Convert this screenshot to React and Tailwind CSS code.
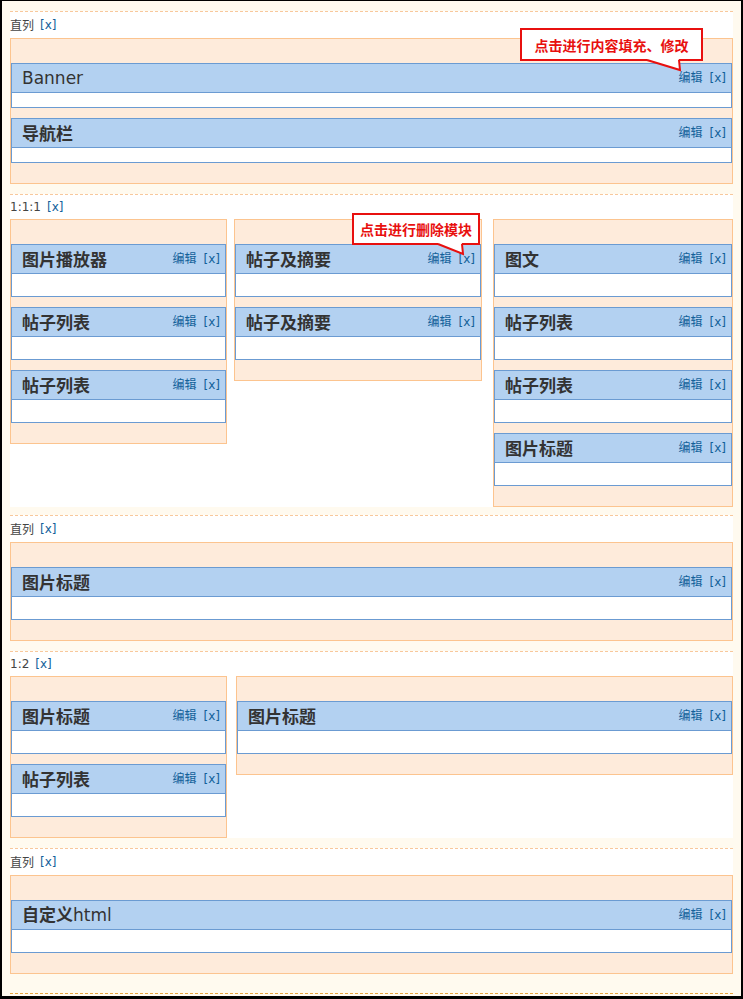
import React from "react";

const cjk = { fontFamily: '"Noto Sans CJK SC", "Noto Sans", sans-serif' };
const latin = { fontFamily: '"DejaVu Sans", "Noto Sans CJK SC", sans-serif' };

function Module({ title, en, short }) {
  return (
    <div className="border border-[#6b9bd2] bg-white">
      <div className="h-[29px] bg-[#b3d1f1] border-b border-[#6b9bd2] flex items-center pl-[10px] pr-[5px]">
        {en ? (
          <span className="text-[17px] text-[#333] leading-none" style={latin}>
            {title}
          </span>
        ) : (
          <span className="relative -top-[1px] text-[17px] text-[#333] font-bold leading-none" style={cjk}>
            {title}
            {title === "自定义" && <span className="font-normal" style={latin}>html</span>}
          </span>
        )}
        <span className="relative -top-[1px] ml-auto text-[12px] text-[#12619a] leading-none" style={cjk}>
          编辑
        </span>
        <span className="ml-[7px] text-[12px] text-[#12619a] leading-none" style={latin}>
          [x]
        </span>
      </div>
      <div className={short ? "h-[14px]" : "h-[22px]"} />
    </div>
  );
}

function Box({ items, className = "", short }) {
  return (
    <div className={"border border-[#fcc48f] bg-[#feebdb] pt-[24px] pb-[20px] flex flex-col gap-[10px] " + className}>
      {items.map((t, i) => (
        <Module key={i} title={t} en={t === "Banner"} short={short} />
      ))}
    </div>
  );
}

function Section({ label, tall, className = "mb-[10px]", children }) {
  return (
    <div className={"bg-white border-t border-dashed border-[#f8c89c] " + className}>
      <div className={(tall ? "h-[26px]" : "h-[24px]") + " flex items-center text-[12px] leading-none"}>
        <span className="text-[#444]" style={label.includes(":") ? latin : cjk}>
          {label}
        </span>
        <span className="ml-[6px] text-[#12619a]" style={latin}>
          [x]
        </span>
      </div>
      {children}
    </div>
  );
}

function Callout({ text, className, tail }) {
  return (
    <>
      <div
        className={"absolute border-2 border-[#e8100f] bg-white flex items-center justify-center text-[14px] font-bold text-[#e8100f] leading-none " + className}
        style={cjk}
      >
        {text}
      </div>
      {tail}
    </>
  );
}

export default function App() {
  return (
    <div className="relative w-[743px] h-[999px] overflow-hidden bg-[#fffaef] border-l-2 border-r-2 border-t border-b-[3px] border-black pt-[10px] pl-[8px] pr-[8px]">
      <Section label="直列" tall>
        <Box items={["Banner", "导航栏"]} short />
      </Section>

      <Section label="1:1:1" className="mb-[8px]">
        <div className="flex items-start">
          <Box items={["图片播放器", "帖子列表", "帖子列表"]} className="w-[217px]" />
          <Box items={["帖子及摘要", "帖子及摘要"]} className="w-[248px] ml-[7px]" />
          <Box items={["图文", "帖子列表", "帖子列表", "图片标题"]} className="w-[240px] ml-[11px]" />
        </div>
      </Section>

      <Section label="直列" tall>
        <Box items={["图片标题"]} />
      </Section>

      <Section label="1:2">
        <div className="flex items-start">
          <Box items={["图片标题", "帖子列表"]} className="w-[217px]" />
          <Box items={["图片标题"]} className="flex-1 ml-[9px]" />
        </div>
      </Section>

      <Section label="直列" tall className="">
        <Box items={["自定义"]} />
      </Section>

      <div className="mt-[19px] border-t border-dashed border-[#e9a53f]" />

      <Callout
        text="点击进行内容填充、修改"
        className="left-[518px] top-[27px] w-[183px] h-[33px]"
        tail={
          <svg className="absolute left-[638px] top-[55px]" width="45" height="18" viewBox="0 0 45 18">
            <polygon points="8,2 38,2 39,4 40,14 7,4" fill="#fff" />
            <polyline points="7,4 40,14 39,4" fill="none" stroke="#e8100f" strokeWidth="2" />
          </svg>
        }
      />
      <Callout
        text="点击进行删除模块"
        className="left-[350px] top-[212px] w-[128px] h-[32px]"
        tail={
          <svg className="absolute left-[428px] top-[238px]" width="40" height="20" viewBox="0 0 40 20">
            <polygon points="9,2 31,2 32,5 33,15 8,5" fill="#fff" />
            <polyline points="8,5 33,15 32,5" fill="none" stroke="#e8100f" strokeWidth="2" />
          </svg>
        }
      />
    </div>
  );
}
